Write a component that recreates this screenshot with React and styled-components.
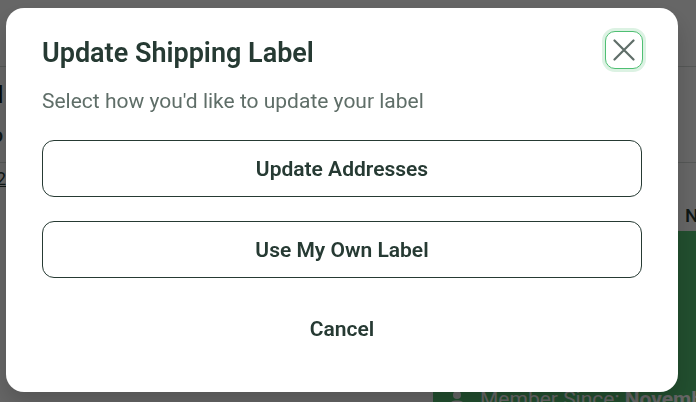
import React from 'react';
import styled, { createGlobalStyle } from 'styled-components';

const options = ['Update Addresses', 'Use My Own Label'];

export default function App() {
  return (
    <>
      <GlobalStyle />
      <Page>
        <TopBar />
        <OrderHead>
          <Clip>
            <Heading>l</Heading>
            <Meta>o</Meta>
          </Clip>
        </OrderHead>
        <Body>
          <Clip>
            <Tracking>2</Tracking>
          </Clip>
          <Side>
            <SideTitle>N</SideTitle>
            <Member>
              <Avatar viewBox="0 0 16 16">
                <circle cx="8" cy="4" r="4" />
                <path d="M0 16c0-5 3.500-6.500 8-6.500s8 1.500 8 6.500z" />
              </Avatar>
              <span>Member Since: <b>November</b></span>
            </Member>
          </Side>
        </Body>
      </Page>
      <Overlay>
        <Modal role="dialog" aria-labelledby="modal-title">
          <Header>
            <Title id="modal-title">Update Shipping Label</Title>
            <Close aria-label="Close">
              <svg width="22" height="22" viewBox="0 0 22 22">
                <path d="M1.500 1.500l19 19M20.500 1.500l-19 19" />
              </svg>
            </Close>
          </Header>
          <Subtitle>Select how you'd like to update your label</Subtitle>
          <Actions>
            {options.map((label) => (
              <Button key={label}>{label}</Button>
            ))}
            <Button $plain>Cancel</Button>
          </Actions>
        </Modal>
      </Overlay>
    </>
  );
}

const GlobalStyle = createGlobalStyle`
  * { box-sizing: border-box; }
  body {
    margin: 0;
    overflow: hidden;
    font-family: Roboto, sans-serif;
    color: #263a33;
  }
  button { font-family: inherit; color: inherit; }
`;

const Page = styled.div`
  height: 402px;
  overflow: hidden;
  background: #fff;
`;

const TopBar = styled.div`
  height: 67px;
  border-bottom: 1px solid #d5dbd8;
`;

const OrderHead = styled.div`
  height: 96px;
  border-bottom: 1px solid #d5dbd8;
`;

const Body = styled.div`
  display: flex;
  justify-content: space-between;
  height: 239px;
`;

const Clip = styled.div`
  display: flex;
  flex-direction: column;
  align-items: flex-end;
  width: 6px;
  height: 100%;
  overflow: hidden;
`;

const Heading = styled.div`
  margin: 14px 3px 0 0;
  font-size: 24px;
  line-height: 28px;
  font-weight: 900;
  color: #0c1a15;
`;

const Meta = styled.div`
  margin: 15px 3px 0 0;
  font-size: 20px;
  line-height: 22px;
  font-weight: 500;
`;

const Tracking = styled.div`
  margin-top: 6px;
  font-size: 18px;
  line-height: 20px;
  text-decoration: underline;
`;

const Side = styled.div`
  display: flex;
  flex-direction: column;
  width: 263px;
`;

const SideTitle = styled.div`
  height: 68px;
  padding: 41px 0 0 252px;
  font-size: 19px;
  line-height: 24px;
  font-weight: 500;
`;

const Member = styled.div`
  flex: 1;
  display: flex;
  align-items: flex-start;
  gap: 15px;
  padding: 156px 0 0 16px;
  background: #55c475;
  color: #fff;
  font-size: 21px;
  line-height: 24px;
  white-space: nowrap;
  overflow: hidden;
`;

const Avatar = styled.svg`
  flex: none;
  width: 16px;
  height: 18px;
  margin-top: 3px;
  fill: #fff;
`;

const Overlay = styled.div`
  position: fixed;
  inset: 0;
  display: flex;
  padding: 8px 18px 10px 6px;
  background: rgba(0, 0, 0, 0.6);
`;

const Modal = styled.div`
  flex: 1;
  padding: 23px 36px 0;
  border-radius: 18px;
  background: #fff;
  box-shadow: 0 12px 24px rgba(0, 0, 0, 0.18);
`;

const Header = styled.div`
  display: flex;
  justify-content: space-between;
  align-items: flex-start;
  height: 57px;
`;

const Title = styled.h2`
  margin: 5px 0 0;
  font-size: 27px;
  line-height: 34px;
  font-weight: 600;
`;

const Close = styled.button`
  display: flex;
  align-items: center;
  justify-content: center;
  width: 38px;
  height: 38px;
  margin-right: -1px;
  padding: 0;
  border: 1px solid #4fbf73;
  border-radius: 10px;
  background: #fff;
  box-shadow: 0 0 0 3px #dcf2e3;

  svg {
    fill: none;
    stroke: #5f6d68;
    stroke-width: 2.2;
    stroke-linecap: round;
  }
`;

const Subtitle = styled.p`
  margin: 0;
  font-size: 21px;
  line-height: 26px;
  color: #5f6e68;
`;

const Actions = styled.div`
  display: flex;
  flex-direction: column;
  gap: 24px;
  margin-top: 26px;
`;

const Button = styled.button`
  height: ${({ $plain }) => ($plain ? '53px' : '57px')};
  padding: 0;
  border: 1px solid ${({ $plain }) => ($plain ? 'transparent' : '#263a33')};
  border-radius: 12px;
  background: transparent;
  font-size: 21px;
  line-height: 26px;
  font-weight: 600;
`;
